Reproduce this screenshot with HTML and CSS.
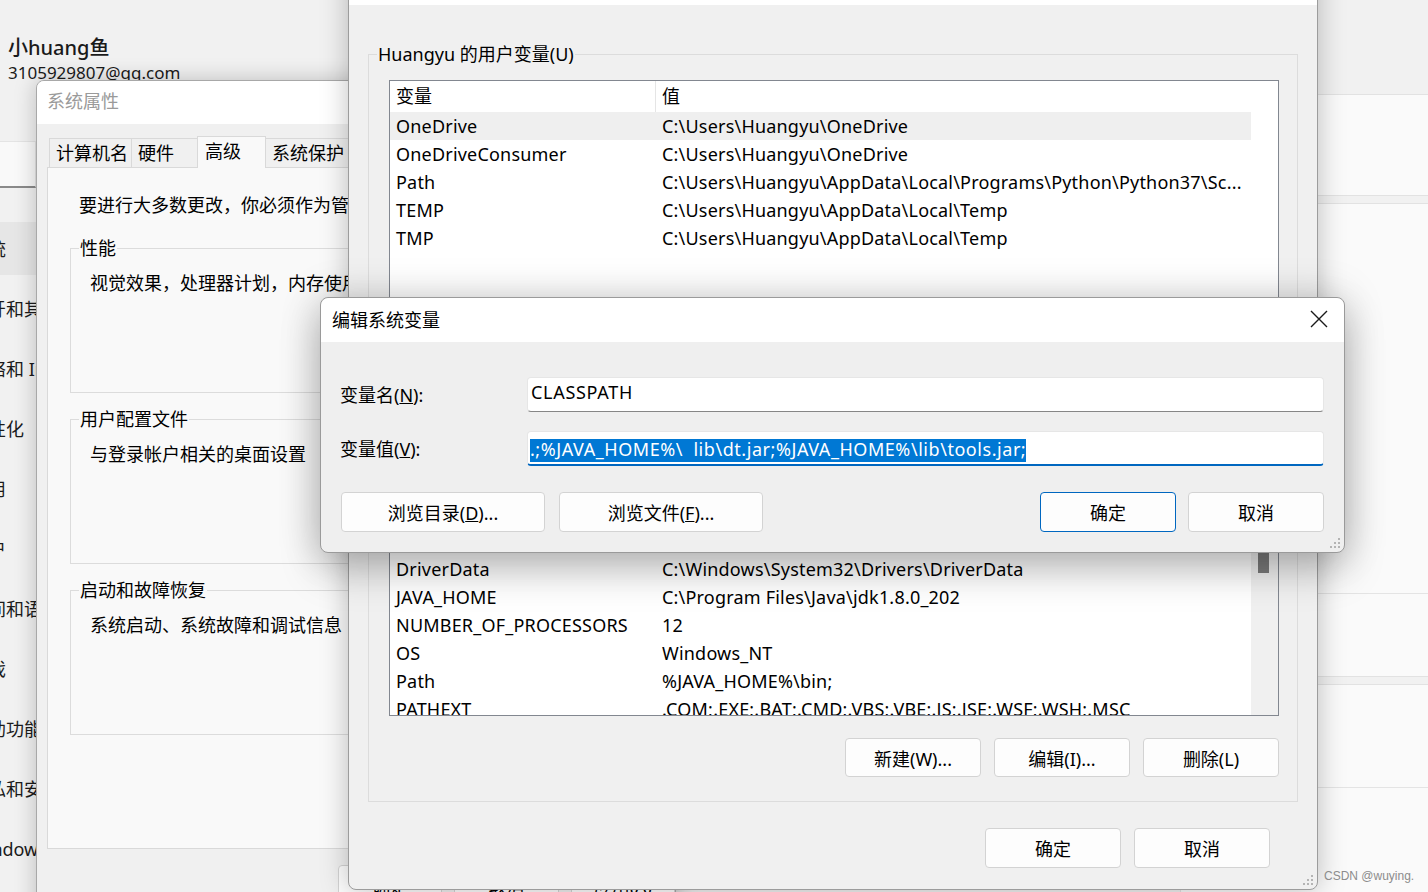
FILE: index.html
```html
<!DOCTYPE html>
<html>

<head>
    <meta charset="utf-8">
    <link rel="stylesheet" href="styles.css">
    <title>编辑系统变量</title>
</head>

<body>
<div class="desktop">

    <!-- settings app, behind the dialogs -->
    <div class="account">
        <div class="account-name">小huang鱼</div>
        <div class="account-mail">3105929807@qq.com</div>
    </div>
    <div class="search-box"></div>
    <ul class="nav">
        <li class="selected">系统</li>
        <li>蓝牙和其他设备</li>
        <li>网络和 Internet</li>
        <li>个性化</li>
        <li>应用</li>
        <li>帐户</li>
        <li>时间和语言</li>
        <li>游戏</li>
        <li>辅助功能</li>
        <li>隐私和安全性</li>
        <li>Windows 更新</li>
    </ul>
    <div class="cards">
        <div class="card card-a"></div>
        <div class="card card-b"><div class="card-row row-b"></div></div>
        <div class="card card-c"><div class="card-row row-c"></div></div>
    </div>

    <!-- 系统属性 -->
    <div class="window sysprops">
        <div class="titlebar inactive">系统属性</div>
        <div class="sysprops-body">
            <div class="tabs">
                <div class="tab tab-name">计算机名</div>
                <div class="tab tab-hw">硬件</div>
                <div class="tab tab-adv active">高级</div>
                <div class="tab tab-prot">系统保护</div>
                <div class="tab tab-remote">远程</div>
            </div>
            <div class="tab-panel">
                <p>要进行大多数更改，你必须作为管理员登录。</p>
                <div class="group sp-group first">
                    <span class="group-title">性能</span>
                    <p>视觉效果，处理器计划，内存使用，以及虚拟内存</p>
                </div>
                <div class="group sp-group">
                    <span class="group-title">用户配置文件</span>
                    <p>与登录帐户相关的桌面设置</p>
                </div>
                <div class="group sp-group">
                    <span class="group-title">启动和故障恢复</span>
                    <p>系统启动、系统故障和调试信息</p>
                </div>
            </div>
            <div class="sysprops-buttons">
                <button class="btn">确定</button>
                <button class="btn">取消</button>
                <button class="btn">应用(A)</button>
            </div>
        </div>
    </div>

    <!-- 环境变量 -->
    <div class="window envvars">
        <div class="titlebar">环境变量</div>
        <div class="env-body">
            <div class="group env-group first">
                <span class="group-title">Huangyu 的用户变量(U)</span>
                <div class="listview">
                    <div class="lv-main">
                        <div class="lv-head"><span class="col-name">变量</span><span class="col-value">值</span></div>
                        <div class="lv-row selected"><span class="col-name">OneDrive</span><span class="col-value">C:\Users\Huangyu\OneDrive</span></div>
                        <div class="lv-row"><span class="col-name">OneDriveConsumer</span><span class="col-value">C:\Users\Huangyu\OneDrive</span></div>
                        <div class="lv-row"><span class="col-name">Path</span><span class="col-value">C:\Users\Huangyu\AppData\Local\Programs\Python\Python37\Sc...</span></div>
                        <div class="lv-row"><span class="col-name">TEMP</span><span class="col-value">C:\Users\Huangyu\AppData\Local\Temp</span></div>
                        <div class="lv-row"><span class="col-name">TMP</span><span class="col-value">C:\Users\Huangyu\AppData\Local\Temp</span></div>
                    </div>
                    <div class="lv-scroll empty"></div>
                </div>
                <div class="group-buttons">
                    <button class="btn">新建(N)...</button>
                    <button class="btn">编辑(E)...</button>
                    <button class="btn">删除(D)</button>
                </div>
            </div>

            <div class="group env-group">
                <span class="group-title">系统变量(S)</span>
                <div class="listview">
                    <div class="lv-main">
                        <div class="lv-head"><span class="col-name">变量</span><span class="col-value">值</span></div>
                        <div class="lv-row"><span class="col-name">CLASSPATH</span><span class="col-value">.;%JAVA_HOME%\ lib\dt.jar;%JAVA_HOME%\lib\tools.jar;</span></div>
                        <div class="lv-row"><span class="col-name">ComSpec</span><span class="col-value">C:\Windows\system32\cmd.exe</span></div>
                        <div class="lv-row"><span class="col-name">DriverData</span><span class="col-value">C:\Windows\System32\Drivers\DriverData</span></div>
                        <div class="lv-row"><span class="col-name">JAVA_HOME</span><span class="col-value">C:\Program Files\Java\jdk1.8.0_202</span></div>
                        <div class="lv-row"><span class="col-name">NUMBER_OF_PROCESSORS</span><span class="col-value">12</span></div>
                        <div class="lv-row"><span class="col-name">OS</span><span class="col-value">Windows_NT</span></div>
                        <div class="lv-row"><span class="col-name">Path</span><span class="col-value">%JAVA_HOME%\bin;</span></div>
                        <div class="lv-row"><span class="col-name">PATHEXT</span><span class="col-value">.COM;.EXE;.BAT;.CMD;.VBS;.VBE;.JS;.JSE;.WSF;.WSH;.MSC</span></div>
                    </div>
                    <div class="lv-scroll"><div class="thumb"></div></div>
                </div>
                <div class="group-buttons">
                    <button class="btn">新建(W)...</button>
                    <button class="btn">编辑(I)...</button>
                    <button class="btn">删除(L)</button>
                </div>
            </div>

            <div class="dialog-buttons">
                <button class="btn">确定</button>
                <button class="btn">取消</button>
            </div>
        </div>
        <svg class="grip" width="11" height="11" viewBox="0 0 11 11">
            <rect x="8" y="0" width="2" height="2" fill="#b4b4b4"/>
            <rect x="4" y="4" width="2" height="2" fill="#b4b4b4"/>
            <rect x="8" y="4" width="2" height="2" fill="#b4b4b4"/>
            <rect x="0" y="8" width="2" height="2" fill="#b4b4b4"/>
            <rect x="4" y="8" width="2" height="2" fill="#b4b4b4"/>
            <rect x="8" y="8" width="2" height="2" fill="#b4b4b4"/>
        </svg>
    </div>

    <!-- 编辑系统变量 -->
    <div class="window editvar">
        <div class="titlebar edit-title">
            <span>编辑系统变量</span>
            <svg class="close" width="18" height="18" viewBox="0 0 18 18">
                <path d="M1 1L17 17M17 1L1 17" stroke="#1a1a1a" stroke-width="1.4" fill="none"/>
            </svg>
        </div>
        <div class="edit-body">
            <div class="field first">
                <label>变量名(<u>N</u>):</label>
                <div class="textbox">CLASSPATH</div>
            </div>
            <div class="field">
                <label>变量值(<u>V</u>):</label>
                <div class="textbox focused"><span class="selection">.;%JAVA_HOME%\&nbsp; lib\dt.jar;%JAVA_HOME%\lib\tools.jar;</span></div>
            </div>
            <div class="edit-buttons">
                <button class="btn wide">浏览目录(<u>D</u>)...</button>
                <button class="btn wide">浏览文件(<u>F</u>)...</button>
                <span class="spacer"></span>
                <button class="btn default">确定</button>
                <button class="btn">取消</button>
            </div>
        </div>
        <svg class="grip" width="11" height="11" viewBox="0 0 11 11">
            <rect x="8" y="0" width="2" height="2" fill="#b4b4b4"/>
            <rect x="4" y="4" width="2" height="2" fill="#b4b4b4"/>
            <rect x="8" y="4" width="2" height="2" fill="#b4b4b4"/>
            <rect x="0" y="8" width="2" height="2" fill="#b4b4b4"/>
            <rect x="4" y="8" width="2" height="2" fill="#b4b4b4"/>
            <rect x="8" y="8" width="2" height="2" fill="#b4b4b4"/>
        </svg>
    </div>

    <div class="watermark">CSDN @wuying.</div>
</div>
</body>

</html>
```

FILE: styles.css
```css
body {
    margin: 0;
    font-family: "Noto Sans", "Noto Sans CJK SC", sans-serif;
    font-size: 18px;
    color: #000;
}

p {
    margin: 0;
    line-height: 24px;
    white-space: nowrap;
}

.desktop {
    position: relative;
    width: 1428px;
    height: 892px;
    overflow: hidden;
    background: #f1f1f1;
}

/* settings app */

.account {
    position: absolute;
    left: 8px;
    top: 35px;
    color: #1a1a1a;
}

.account-name {
    font-size: 20px;
    font-weight: 500;
    line-height: 26px;
}

.account-mail {
    font-size: 17px;
    line-height: 24px;
}

.search-box {
    position: absolute;
    left: -20px;
    top: 141px;
    width: 56px;
    height: 47px;
    box-sizing: border-box;
    background: #f9f9f9;
    border: 1px solid #e4e4e4;
    border-bottom: 2px solid #8a8a8a;
}

.nav {
    position: absolute;
    left: -44px;
    top: 222px;
    width: 90px;
    margin: 0;
    padding: 0;
    list-style: none;
}

.nav li {
    height: 53px;
    line-height: 55px;
    margin-bottom: 7px;
    padding-left: 14px;
    border-radius: 5px;
    white-space: nowrap;
    color: #1b1b1b;
}

.nav li.selected {
    background: #e6e6e6;
}

.cards {
    position: absolute;
    left: 1180px;
    top: 94px;
    width: 300px;
    display: flex;
    flex-direction: column;
    gap: 7px;
}

.card {
    box-sizing: border-box;
    background: #fafafa;
    border: 1px solid #e2e2e2;
    border-radius: 6px;
}

.card-a {
    height: 102px;
}

.card-b {
    height: 474px;
}

.card-c {
    height: 260px;
}

.card-row {
    border-bottom: 1px solid #e4e4e4;
}

.row-b {
    height: 389px;
}

.row-c {
    height: 102px;
}

/* windows */

.window {
    position: absolute;
    box-sizing: border-box;
    background: #f0f0f0;
}

.titlebar {
    background: #fff;
    white-space: nowrap;
}

.btn {
    width: 136px;
    height: 40px;
    padding: 0;
    box-sizing: border-box;
    background: #fdfdfd;
    border: 1px solid #d3d3d3;
    border-radius: 4px;
    font-family: inherit;
    font-size: 18px;
    color: #000;
}

.group {
    box-sizing: border-box;
    border: 1px solid #dcdcdc;
    display: flex;
    flex-direction: column;
    align-items: flex-start;
}

.group-title {
    margin: -13px 0 0 8px;
    padding: 0 1px;
    line-height: 24px;
    background: #f0f0f0;
    white-space: nowrap;
}

/* 系统属性 */

.sysprops {
    left: 36px;
    top: 80px;
    width: 640px;
    height: 880px;
    border: 1px solid #a8a8a8;
    border-radius: 8px 8px 0 0;
    box-shadow: 0 0 22px rgba(0, 0, 0, 0.22);
    overflow: hidden;
}

.sysprops .titlebar {
    height: 43px;
    line-height: 41px;
    padding-left: 10px;
}

.titlebar.inactive {
    color: #9a9a9a;
}

.sysprops-body {
    padding: 12px 0 0 10px;
}

.tabs {
    display: flex;
    align-items: flex-end;
    height: 31px;
    margin-left: 2px;
}

.tab {
    height: 29px;
    box-sizing: border-box;
    line-height: 29px;
    padding-left: 6px;
    margin-right: -1px;
    background: #f0f0f0;
    border: 1px solid #d9d9d9;
    border-bottom: none;
    white-space: nowrap;
}

.tab.active {
    position: relative;
    z-index: 1;
    height: 32px;
    margin-bottom: -1px;
    line-height: 28px;
    padding-left: 7px;
    background: #f9f9f9;
}

.tab-name {
    width: 83px;
}

.tab-hw {
    width: 67px;
}

.tab-adv {
    width: 69px;
}

.tab-prot {
    width: 90px;
}

.tab-remote {
    width: 60px;
}

.tab-panel {
    width: 700px;
    height: 682px;
    box-sizing: border-box;
    padding: 25px 0 0 31px;
    background: #f9f9f9;
    border: 1px solid #d9d9d9;
}

.sp-group {
    width: 620px;
    height: 145px;
    margin: 26px 0 0 -9px;
}

.sp-group.first {
    margin-top: 31px;
}

.sp-group .group-title {
    background: #f9f9f9;
}

.sp-group p {
    margin: 11px 0 0 19px;
}

.sysprops-buttons {
    display: flex;
    gap: 12px;
    margin: 16px 0 0 291px;
}

/* 环境变量 */

.envvars {
    left: 348px;
    top: -41px;
    width: 970px;
    height: 931px;
    border: 1px solid #9c9c9c;
    border-radius: 0 0 8px 8px;
    box-shadow: 0 0 28px rgba(0, 0, 0, 0.25);
}

.envvars .titlebar {
    height: 45px;
}

.env-body {
    padding: 0 19px 0 19px;
}

.env-group {
    height: 361px;
    margin-top: 26px;
    padding: 0 18px 0 20px;
}

.env-group.first {
    margin-top: 49px;
}

.env-group .group-title {
    margin-left: -12px;
}

.listview {
    width: 890px;
    height: 249px;
    margin-top: 14px;
    box-sizing: border-box;
    display: flex;
    background: #fff;
    border: 1px solid #828790;
    overflow: hidden;
}

.lv-main {
    width: 861px;
    overflow: hidden;
}

.lv-head,
.lv-row {
    display: flex;
    white-space: nowrap;
}

.lv-head {
    height: 31px;
    line-height: 31px;
}

.lv-row {
    height: 28px;
    line-height: 28px;
    letter-spacing: 0.2px;
}

.lv-row.selected {
    background: #efefef;
}

.col-name {
    width: 259px;
    flex: none;
    padding-left: 6px;
}

.lv-head .col-name {
    border-right: 1px solid #e5e5e5;
}

.col-value {
    padding-left: 6px;
}

.lv-row .col-value {
    padding-left: 7px;
}

.lv-scroll {
    flex: 1;
    background: #f0f0f0;
}

.lv-scroll.empty {
    background: #fff;
}

.thumb {
    width: 11px;
    height: 46px;
    margin: 59px 0 0 7px;
    background: #7b7b7b;
}

.group-buttons {
    align-self: stretch;
    display: flex;
    justify-content: flex-end;
    gap: 13px;
    margin-top: 22px;
}

.group-buttons .btn {
    height: 39px;
}

.dialog-buttons {
    display: flex;
    justify-content: flex-end;
    gap: 13px;
    margin-top: 26px;
    padding-right: 28px;
}

.grip {
    position: absolute;
    right: 3px;
    bottom: 3px;
}

/* 编辑系统变量 */

.editvar {
    left: 320px;
    top: 297px;
    width: 1025px;
    height: 256px;
    background: #efefef;
    border: 1px solid #9a9a9a;
    border-radius: 8px;
    box-shadow: 0 0 40px rgba(0, 0, 0, 0.18), 0 18px 40px rgba(0, 0, 0, 0.22);
    overflow: hidden;
}

.edit-title {
    height: 44px;
    box-sizing: border-box;
    display: flex;
    justify-content: space-between;
    align-items: center;
    padding: 0 16px 3px 11px;
    border-radius: 8px 8px 0 0;
}

.edit-body {
    padding: 35px 20px 0 19px;
}

.field {
    display: flex;
    align-items: center;
    height: 35px;
}

.field.first {
    margin-bottom: 19px;
}

.field label {
    width: 187px;
    flex: none;
    padding-bottom: 2px;
}

.textbox {
    flex: 1;
    height: 35px;
    box-sizing: border-box;
    padding-left: 3px;
    line-height: 29px;
    letter-spacing: 0.7px;
    background: #fff;
    border: 1px solid #e6e6e6;
    border-bottom: 1px solid #868686;
    border-radius: 4px;
    white-space: nowrap;
}

.textbox.focused {
    padding: 3px 0 0 2px;
    border-bottom: 2px solid #0067c0;
}

.selection {
    display: inline-block;
    height: 23px;
    line-height: 21px;
    letter-spacing: 0.55px;
    background: #0078d4;
    color: #fff;
}

.edit-buttons {
    display: flex;
    margin-top: 26px;
}

.btn.wide {
    width: 204px;
    margin-left: 1px;
    margin-right: 13px;
}

.spacer {
    flex: 1;
}

.btn.default {
    margin-right: 12px;
    border-color: #0067c0;
}

.watermark {
    position: absolute;
    left: 1324px;
    top: 869px;
    font-family: "Liberation Sans", sans-serif;
    font-size: 12px;
    color: #8c8c8c;
}
```
